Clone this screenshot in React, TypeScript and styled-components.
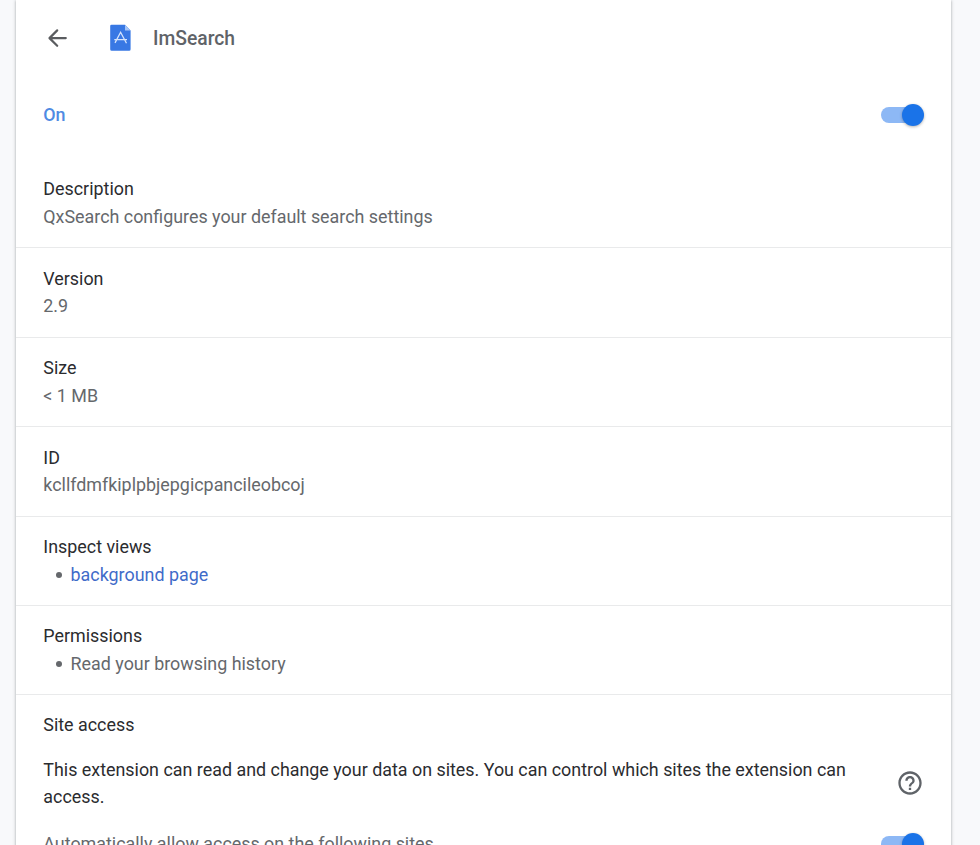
import styled, { createGlobalStyle } from "styled-components";

const GlobalStyle = createGlobalStyle`
  body {
    margin: 0;
    height: 845px;
    overflow: hidden;
    background: #f8f9fb;
    font-family: Roboto, "Liberation Sans", sans-serif;
    font-size: 17.89px;
    line-height: 27.5px;
    color: #2b2c2f;
  }
`;

const Card = styled.main`
  box-sizing: border-box;
  width: 935px;
  height: 860px;
  margin-left: 16px;
  background: #fff;
  box-shadow: 0 1px 2px rgba(60, 64, 67, 0.3), 0 1px 3px 1px rgba(60, 64, 67, 0.15);
`;

const Header = styled.header`
  display: flex;
  align-items: center;
  height: 76px;
  padding-left: 27px;

  svg {
    display: block;
  }

  h1 {
    margin: 1px 0 0 21px;
    font-size: 19.3px;
    font-weight: 500;
    color: #5f6368;
  }
`;

const BackButton = styled.button`
  width: 28px;
  height: 28px;
  margin-right: 37px;
  padding: 0;
  border: 0;
  background: none;
`;

const StatusRow = styled.div`
  display: flex;
  align-items: center;
  justify-content: space-between;
  height: 78px;
  padding: 0 28px 0 27.3px;
  font-weight: 500;
  color: #4f8ae3;
`;

const Toggle = styled.button`
  display: flex;
  flex: none;
  align-items: center;
  justify-content: flex-end;
  width: 42px;
  height: 16px;
  padding: 0;
  border: 0;
  border-radius: 8px;
  background: #8db8f5;

  span {
    flex: none;
    width: 22px;
    height: 22px;
    margin-right: -1px;
    border-radius: 50%;
    background: #1a73e8;
    box-shadow: 0 1px 3px rgba(0, 0, 0, 0.3);
  }
`;

const Section = styled.section<{ $first?: boolean }>`
  box-sizing: border-box;
  height: ${({ $first }) => ($first ? "93.45px" : "89.4px")};
  padding: ${({ $first }) => ($first ? "21px" : "16.4px")} 27.3px 0;
  border-top: ${({ $first }) => ($first ? "none" : "1px solid #e9eaeb")};

  h2 {
    margin: 0;
    font-size: inherit;
    font-weight: 400;
  }

  p,
  ul {
    margin: 0;
    color: #65686c;
  }

  ul {
    padding: 0;
    list-style: none;
  }

  a {
    color: #3f6bc9;
    text-decoration: none;
  }
`;

const Bullet = styled.li`
  display: flex;
  align-items: center;
  padding-left: 12.7px;

  &::before {
    content: "";
    width: 6px;
    height: 6px;
    margin: 1px 8.6px 0 0;
    border-radius: 50%;
    background: #65686c;
  }
`;

const SiteAccess = styled(Section)`
  height: auto;
  padding-top: 15.8px;
`;

const AccessRow = styled.div`
  display: flex;
  align-items: center;
  justify-content: space-between;
  margin-top: 17px;

  div {
    width: 820px;
  }

  svg {
    flex: none;
    margin-right: -0.5px;
  }
`;

const AllowRow = styled.div`
  display: flex;
  align-items: center;
  justify-content: space-between;
  margin: 19.5px 0.7px 0 0;
  color: #65686c;
`;

function BackIcon() {
  return (
    <svg
      width="28"
      height="28"
      viewBox="0 0 28 28"
      fill="none"
      stroke="#5a5c5f"
      strokeWidth="2.2"
      strokeLinecap="round"
      strokeLinejoin="round"
    >
      <path d="M6.7 14.1H22.8M14.2 6.4L6.5 14.1l7.7 7.7" />
    </svg>
  );
}

function ExtensionIcon() {
  return (
    <svg width="24" height="28" viewBox="0 0 24 28">
      <path
        d="M3.5 .7H17l5.6 5.7v18.8a1.5 1.5 0 0 1-1.5 1.5H3.7a1.5 1.5 0 0 1-1.5-1.5V2A1.3 1.3 0 0 1 3.5 .7z"
        fill="#3878e4"
      />
      <path d="M17 .7l5.6 5.7H17z" fill="#a5c5f8" />
      <path
        d="M7 18.9l5.6-10.6 5.9 11M6.3 15.6h12.7"
        fill="none"
        stroke="#d5e4fc"
        strokeWidth="1.3"
      />
    </svg>
  );
}

function HelpIcon() {
  return (
    <svg width="28" height="28" viewBox="0 0 24 24" fill="#5f6368">
      <path d="M11 18h2v-2h-2v2zm1-16C6.48 2 2 6.48 2 12s4.48 10 10 10 10-4.48 10-10S17.52 2 12 2zm0 18c-4.41 0-8-3.59-8-8s3.59-8 8-8 8 3.59 8 8-3.59 8-8 8zm0-14c-2.21 0-4 1.79-4 4h2c0-1.1.9-2 2-2s2 .9 2 2c0 2-3 1.75-3 5h2c0-2.25 3-2.5 3-5 0-2.21-1.79-4-4-4z" />
    </svg>
  );
}

export default function App() {
  return (
    <>
      <GlobalStyle />
      <Card>
        <Header>
          <BackButton type="button" aria-label="Back">
            <BackIcon />
          </BackButton>
          <ExtensionIcon />
          <h1>ImSearch</h1>
        </Header>

        <StatusRow>
          On
          <Toggle type="button">
            <span />
          </Toggle>
        </StatusRow>

        <Section $first>
          <h2>Description</h2>
          <p>QxSearch configures your default search settings</p>
        </Section>
        <Section>
          <h2>Version</h2>
          <p>2.9</p>
        </Section>
        <Section>
          <h2>Size</h2>
          <p>&lt; 1 MB</p>
        </Section>
        <Section>
          <h2>ID</h2>
          <p>kcllfdmfkiplpbjepgicpancileobcoj</p>
        </Section>
        <Section>
          <h2>Inspect views</h2>
          <ul>
            <Bullet>
              <a>background page</a>
            </Bullet>
          </ul>
        </Section>
        <Section>
          <h2>Permissions</h2>
          <ul>
            <Bullet>Read your browsing history</Bullet>
          </ul>
        </Section>
        <SiteAccess>
          <h2>Site access</h2>
          <AccessRow>
            <div>
              This extension can read and change your data on sites. You can
              control which sites the extension can access.
            </div>
            <HelpIcon />
          </AccessRow>
          <AllowRow>
            Automatically allow access on the following sites
            <Toggle type="button">
              <span />
            </Toggle>
          </AllowRow>
        </SiteAccess>
      </Card>
    </>
  );
}
